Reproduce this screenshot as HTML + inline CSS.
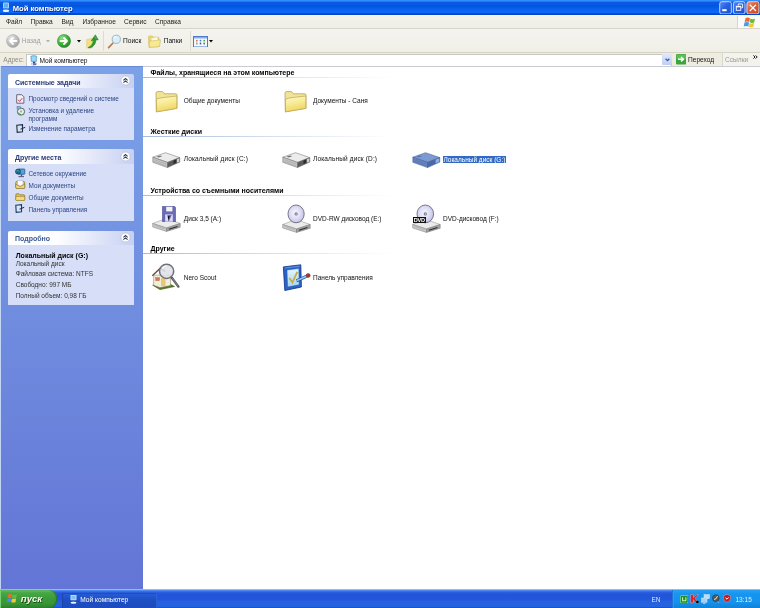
<!DOCTYPE html>
<html><head><meta charset="utf-8">
<style>
*{margin:0;padding:0;box-sizing:border-box}
html,body{width:760px;height:608px;overflow:hidden;background:#fff;font-family:"Liberation Sans",sans-serif;color:#000}
.a{position:absolute;white-space:nowrap}
#title{left:0;top:0;width:760px;height:15px;background:linear-gradient(#3a95ff 0px,#2a80f8 1.2px,#0a5ae6 2.5px,#0555dc 6px,#0a60f0 9px,#0c68f8 12.5px,#0848c8 13.6px,#0848c8 15px)}
#menu{left:0;top:15px;width:760px;height:13.5px;background:linear-gradient(#fbfbf8 0px,#f2f1ea 1.2px,#eeede6 100%);border-bottom:0.8px solid #d8d6cc}
#menu span{position:absolute;top:3px;font-size:6.6px;color:#222}
#tb{left:0;top:28.5px;width:760px;height:24.5px;background:linear-gradient(#f4f3ee,#f0efe7);border-bottom:0.8px solid #d8d4c4}
#addr{left:0;top:53px;width:760px;height:13px;background:#efede2}
#left{left:0;top:66px;width:143px;height:523px;background:linear-gradient(#7ba2e7,#6375d6);box-shadow:inset 0 1px 0 #6a8ad8}
#right{left:143px;top:66px;width:617px;height:523px;background:#fff;box-shadow:inset 0 1px 0 #c8ccd2}
.panel{position:absolute;left:8px;width:126px}
.ph{position:absolute;left:0;top:0;width:126px;height:14.5px;background:linear-gradient(90deg,#fff 0%,#fdfdff 40%,#c6d0f2 100%);border-radius:2px 2px 0 0}
.ph b{position:absolute;left:7px;top:5px;font-size:7px;color:#2a3c76}
.pb{position:absolute;left:0;width:126px;background:#d6dff7}
.lk{position:absolute;left:20.5px;font-size:6.4px;color:#2e4484;white-space:nowrap}
.sh{position:absolute;left:7.5px;font-size:7px;font-weight:bold;color:#000;white-space:nowrap}
.ul{position:absolute;left:0;width:250px;height:1px;background:linear-gradient(90deg,#a8bcd8,#cad8ea 40%,rgba(255,255,255,0))}
.it{position:absolute;font-size:6.5px;color:#111;white-space:nowrap}
.sel{background:#316ac5;color:#fff;padding:0 0.5px}
#task{left:0;top:589px;width:760px;height:19px;background:linear-gradient(#9cb4f4 0,#9cb4f4 0.5px,#6a9af4 1px,#3f7ef0 1.8px,#2a60e0 3.2px,#2254d8 5.5px,#2256da 10px,#2462e0 13px,#2462e0 17.6px,#1a48c0 19px)}
.sep{top:2.5px;width:1px;height:20px;background:#dedbd0}
</style></head><body><div id="root" style="position:absolute;left:0;top:0;width:760px;height:608px;overflow:hidden;will-change:transform">
<div id="title" class="a">
 <svg class="a" style="left:2px;top:2px" width="8" height="10" viewBox="0 0 8 10"><rect x="1" y="0.5" width="6" height="6" rx="0.8" fill="#9fd4ff"/><rect x="2" y="1.5" width="4" height="4" fill="#5ab0f5"/><rect x="3" y="6.5" width="2" height="1.5" fill="#3a5fb0"/><ellipse cx="4" cy="8.8" rx="3.2" ry="1.2" fill="#e8f2ff"/></svg>
 <div class="a" style="left:12.8px;top:3.5px;font-size:7.6px;font-weight:bold;color:#fff;text-shadow:0.6px 0.6px 0 #0a2a8a">Мой компьютер</div>
 <svg class="a" style="left:718.8px;top:0.8px" width="41" height="13.6" viewBox="0 0 41 13.6"><defs><linearGradient id="bb" x1="0" y1="0" x2="1" y2="1"><stop offset="0" stop-color="#5a8cf2"/><stop offset="0.45" stop-color="#2a62e4"/><stop offset="1" stop-color="#1a4cd0"/></linearGradient><linearGradient id="br" x1="0" y1="0" x2="1" y2="1"><stop offset="0" stop-color="#ec9a7e"/><stop offset="0.45" stop-color="#dc5c38"/><stop offset="1" stop-color="#c8482a"/></linearGradient></defs>
<rect x="0.7" y="0.7" width="11.6" height="12.3" rx="2" fill="url(#bb)" stroke="#cfe0ff" stroke-width="0.9"/>
<rect x="3.2" y="8.2" width="4.4" height="2" fill="#fff"/>
<rect x="14.4" y="0.7" width="11.6" height="12.3" rx="2" fill="url(#bb)" stroke="#cfe0ff" stroke-width="0.9"/>
<path d="M19.3 4.6V3H23.6V6.8H22.2" stroke="#fff" stroke-width="0.9" fill="none"/><rect x="17.3" y="5.3" width="4.5" height="4" fill="none" stroke="#fff" stroke-width="0.9"/><path d="M17.3 5.7H21.8" stroke="#fff" stroke-width="1.3"/>
<rect x="27.9" y="0.7" width="12" height="12.3" rx="2" fill="url(#br)" stroke="#f0d8d0" stroke-width="0.9"/>
<path d="M30.8 3.8L37 10M37 3.8L30.8 10" stroke="#fff" stroke-width="1.2"/>
</svg>
</div>
<div id="menu" class="a">
<span style="left:6px">Файл</span><span style="left:30.5px">Правка</span><span style="left:61.5px">Вид</span><span style="left:82.5px">Избранное</span><span style="left:124px">Сервис</span><span style="left:155px">Справка</span>
 <div style="position:absolute;left:736.7px;top:1px;width:23.3px;height:12.3px;background:#fbfcf8;border-left:0.7px solid #d8d6cc"></div>
 <svg style="position:absolute;left:742.5px;top:2px" width="13" height="11" viewBox="0 0 13 11"><path d="M2.5 1.2Q4.5 0 7 1.2L6.2 5Q3.8 3.8 1.6 5Z" fill="#f26a2a"/><path d="M7.5 1.5Q9.6 2.7 12 1.6L11.2 5.5Q8.8 6.5 6.7 5.3Z" fill="#6cb83a"/><path d="M1.5 5.6Q3.7 4.4 6.1 5.6L5.3 9.5Q3 8.3 0.7 9.5Z" fill="#4a9ae8"/><path d="M6.6 5.9Q8.7 7 11.1 6L10.3 9.9Q8 10.9 5.8 9.8Z" fill="#f8c62a"/></svg>
</div>
<div id="tb" class="a">
 <svg class="a" style="left:5.5px;top:5.8px" width="14" height="14" viewBox="0 0 14 14"><defs><radialGradient id="gb" cx="0.35" cy="0.3" r="0.8"><stop offset="0" stop-color="#e8e8e8"/><stop offset="0.6" stop-color="#b9b9b9"/><stop offset="1" stop-color="#9a9a9a"/></radialGradient></defs><circle cx="7" cy="7" r="6.5" fill="url(#gb)" stroke="#a8a8a8" stroke-width="0.5"/><path d="M10.5 7H4.5M7 4L4 7L7 10" stroke="#fff" stroke-width="1.8" fill="none" stroke-linecap="round" stroke-linejoin="round"/></svg>
 <div class="a" style="left:21.7px;top:8.7px;font-size:6.6px;color:#a0a0a0">Назад</div>
 <svg class="a" style="left:45.5px;top:11.3px" width="4" height="3" viewBox="0 0 4 3"><path d="M0 0H4L2 2.5Z" fill="#b0b0b0"/></svg>
 <svg class="a" style="left:57.2px;top:5.8px" width="14" height="14" viewBox="0 0 14 14"><defs><radialGradient id="gf" cx="0.35" cy="0.3" r="0.8"><stop offset="0" stop-color="#8fe08a"/><stop offset="0.55" stop-color="#3fae38"/><stop offset="1" stop-color="#1f7d1f"/></radialGradient></defs><circle cx="7" cy="7" r="6.6" fill="url(#gf)" stroke="#2a8a2a" stroke-width="0.5"/><path d="M3.5 7H9.5M7 4L10 7L7 10" stroke="#fff" stroke-width="1.8" fill="none" stroke-linecap="round" stroke-linejoin="round"/></svg>
 <svg class="a" style="left:76.5px;top:11.3px" width="4" height="3" viewBox="0 0 4 3"><path d="M0 0H4L2 2.5Z" fill="#000"/></svg>
 <svg class="a" style="left:86.2px;top:5.2px" width="13" height="15" viewBox="0 0 13 15"><path d="M0.5 5.5L6.5 4.2V13.8L0.8 14.2Z" fill="#f4e080" stroke="#d8c060" stroke-width="0.4"/><path d="M2 13.5Q6.5 12 7.5 6.5L5.2 6.8L9.3 0.8L12.3 5.8L10 6Q9.5 12 4 14Z" fill="#2a9a2a" stroke="#1a6a1a" stroke-width="0.4"/><path d="M8.8 2.2L10.5 5" stroke="#6ad06a" stroke-width="0.7"/></svg>
 <div class="a sep" style="left:103.3px"></div>
 <svg class="a" style="left:106.5px;top:5.5px" width="15" height="15" viewBox="0 0 15 15"><path d="M1.6 13.6L5.8 9.2" stroke="#b07850" stroke-width="1.6" stroke-linecap="round"/><circle cx="9.3" cy="5.3" r="4.1" fill="#d8f0fc" stroke="#a0b4c4" stroke-width="1"/><path d="M7 4A2.5 2.5 0 0 1 9.6 2.6" stroke="#fff" stroke-width="0.8" fill="none"/></svg>
 <div class="a" style="left:123px;top:8.7px;font-size:6.6px;color:#111">Поиск</div>
 <svg class="a" style="left:148px;top:6.6px" width="14" height="13" viewBox="0 0 14 13"><path d="M0.5 2Q0.5 1 1.5 1H4.5L5.5 2.2H10Q11 2.2 11 3.2V11.5L1 12.3Z" fill="#ecd870" stroke="#c8b050" stroke-width="0.5"/><path d="M3 3.5L9.5 1.8L10.5 8L4 9.5Z" fill="#fffbe8" stroke="#d0c8a0" stroke-width="0.4"/><path d="M1.2 6.2L12.5 4.8L11.5 11.6L1.3 12.4Z" fill="#f8e890" stroke="#c8b050" stroke-width="0.5"/></svg>
 <div class="a" style="left:163.7px;top:8.7px;font-size:6.6px;color:#111">Папки</div>
 <div class="a sep" style="left:189.5px"></div>
 <svg class="a" style="left:192.8px;top:7.3px" width="15" height="11.5" viewBox="0 0 15 11.5"><rect x="0.5" y="0.5" width="14" height="10.5" fill="#f4f8fc" stroke="#4a7ad0" stroke-width="1"/><rect x="1" y="1" width="13" height="1.5" fill="#8aaee8"/><path d="M3.8 4V9M7.5 4V9M11.2 4V9" stroke="#c0c8d0" stroke-width="1.4"/><circle cx="3.8" cy="4.5" r="0.8" fill="#e06a3a"/><circle cx="7.5" cy="4.5" r="0.8" fill="#4a7ad0"/><circle cx="11.2" cy="4.5" r="0.8" fill="#4aa04a"/><circle cx="3.8" cy="7.5" r="0.8" fill="#d8a040"/><circle cx="7.5" cy="7.5" r="0.8" fill="#3a5a90"/><circle cx="11.2" cy="7.5" r="0.8" fill="#3a8a3a"/></svg>
 <svg class="a" style="left:209.2px;top:11.3px" width="4" height="3" viewBox="0 0 4 3"><path d="M0 0H4L2 2.5Z" fill="#000"/></svg>
</div>
<div id="addr" class="a">
 <div class="a" style="left:3.3px;top:3.4px;font-size:6.5px;color:#8a8a80">Адрес:</div>
 <div class="a" style="left:26.2px;top:0.5px;width:645.4px;height:12.5px;background:#fff;border:0.8px solid #c8c8c0;border-bottom:none"></div>
 <svg class="a" style="left:30px;top:2px" width="7.5" height="10.5" viewBox="0 0 7.5 10.5"><path d="M0.8 1.2Q3.7 -0.2 6.8 1.2L6.4 6.6Q3.7 7.6 1.2 6.6Z" fill="#78c4f0" stroke="#4a88c0" stroke-width="0.5"/><path d="M1.8 1.8Q3.7 1 5.8 1.8L5.6 5.4Q3.7 6 2 5.4Z" fill="#9ad8fa"/><path d="M3 6.8H5.2V8.2H3Z" fill="#2a4a8a"/><path d="M1 8.4Q3.8 7.6 6.8 8.4L6.2 10Q3.8 10.5 1.4 10Z" fill="#6a70b0"/><path d="M1.2 8.6L3 8.3V10.1L1.4 10Z" fill="#e0e4ff"/></svg>
 <div class="a" style="left:39.5px;top:3.6px;font-size:6.6px;color:#111">Мой компьютер</div>
 <div class="a" style="left:662px;top:1px;width:9.6px;height:11.2px;background:linear-gradient(#dfe8fb,#c0cff2);border-radius:1px"></div>
 <svg class="a" style="left:664.6px;top:5px" width="5" height="4" viewBox="0 0 5 4"><path d="M0.6 0.8L2.5 2.7L4.4 0.8" stroke="#3a5aa8" stroke-width="1.3" fill="none"/></svg>
 <svg class="a" style="left:675.8px;top:1.2px" width="10.5" height="10.5" viewBox="0 0 10.5 10.5"><rect x="0" y="0" width="10.5" height="10.5" rx="1.2" fill="#3aa53a"/><rect x="0.5" y="0.5" width="9.5" height="4.5" rx="1" fill="#6cc86a" opacity="0.7"/><path d="M2 5.2H7M5 3L7.6 5.2L5 7.4" stroke="#fff" stroke-width="1.4" fill="none" stroke-linejoin="round"/></svg>
 <div class="a" style="left:688px;top:3.1px;font-size:6.6px;color:#111">Переход</div>
 <div class="a" style="left:721.8px;top:0;width:38.2px;height:13px;background:#f3f2ec;border-left:1px solid #dcd8cc"></div>
 <div class="a" style="left:725px;top:3.1px;font-size:6.6px;color:#9a9890">Ссылки</div>
 <svg class="a" style="left:752.5px;top:2.2px" width="5" height="4" viewBox="0 0 5 4"><path d="M0.4 0.4L2 2L0.4 3.6M2.6 0.4L4.2 2L2.6 3.6" stroke="#000" stroke-width="0.9" fill="none"/></svg>
</div>
<div id="left" class="a">
 <div class="a" style="left:0;top:0;width:1px;height:523px;background:linear-gradient(#c8dcf8,#c0d4f4)"></div>
 <div class="panel" style="top:7.7px">
  <div class="ph"><b>Системные задачи</b><svg class="a" style="left:112px;top:1.6px" width="11" height="11" viewBox="0 0 11 11"><circle cx="5.5" cy="5.5" r="4.6" fill="#fff" stroke="#b8c0d8" stroke-width="0.8"/><path d="M3.4 5.3L5.5 3.5L7.6 5.3M3.4 7.7L5.5 5.9L7.6 7.7" stroke="#333a50" stroke-width="1.05" fill="none"/></svg></div>
  <div class="pb" style="top:14.4px;height:51.8px">
   <svg class="a" style="left:8px;top:5.7px" width="9" height="10" viewBox="0 0 9 10"><path d="M0.7 0.7H5.8L7.9 2.8V9.2H0.7Z" fill="#eef0f4" stroke="#706878" stroke-width="1"/><path d="M2.2 5.8L3.6 7.4L6.2 4.2" stroke="#c83060" stroke-width="1" fill="none"/></svg>
   <div class="lk" style="top:7.0px">Просмотр сведений о системе</div>
   <svg class="a" style="left:8px;top:18.2px" width="9.5" height="9.5" viewBox="0 0 9.5 9.5"><circle cx="5" cy="5.6" r="3.6" fill="#e4ece4" stroke="#485a58" stroke-width="0.9"/><circle cx="5" cy="5.6" r="1" fill="#8aa"/><rect x="1" y="0.4" width="3.2" height="2.6" fill="#8ab0c8" stroke="#5a6a8a" stroke-width="0.4"/><path d="M2 6.5Q3 8.5 5 8.6" stroke="#3a9a3a" stroke-width="1" fill="none"/></svg>
   <div class="lk" style="top:19.0px">Установка и удаление</div>
   <div class="lk" style="top:26.8px">программ</div>
   <svg class="a" style="left:7.6px;top:36.2px" width="10" height="9" viewBox="0 0 10 9"><path d="M0.8 1.2L6.5 0.7V7.8L1.2 8.4Z" fill="#d8e4ec" stroke="#1e2a4a" stroke-width="1.1"/><path d="M4.5 5.2L9.2 3.3" stroke="#1e2a4a" stroke-width="1"/></svg>
   <div class="lk" style="top:37.0px">Изменение параметра</div>
  </div>
 </div>
 <div class="panel" style="top:83.2px">
  <div class="ph"><b>Другие места</b><svg class="a" style="left:112px;top:1.6px" width="11" height="11" viewBox="0 0 11 11"><circle cx="5.5" cy="5.5" r="4.6" fill="#fff" stroke="#b8c0d8" stroke-width="0.8"/><path d="M3.4 5.3L5.5 3.5L7.6 5.3M3.4 7.7L5.5 5.9L7.6 7.7" stroke="#333a50" stroke-width="1.05" fill="none"/></svg></div>
  <div class="pb" style="top:14.7px;height:57.1px">
   <svg class="a" style="left:7.2px;top:4.6px" width="10.5" height="10" viewBox="0 0 10.5 10"><rect x="3.2" y="1" width="6.6" height="5.2" rx="0.6" fill="#4aa8e8" stroke="#1a4a78" stroke-width="0.7"/><circle cx="3" cy="3.6" r="2.6" fill="#1a6a8a" stroke="#0a3050" stroke-width="0.5"/><path d="M1.5 3Q3 2 4.5 3.2" stroke="#6ad0c0" stroke-width="0.6" fill="none"/><path d="M3.5 8.6H9" stroke="#6a5a8a" stroke-width="1.1"/><rect x="5.8" y="6.2" width="1.4" height="2" fill="#4a5a7a"/></svg>
   <div class="lk" style="top:6.1px">Сетевое окружение</div>
   <svg class="a" style="left:7.2px;top:16.4px" width="10.5" height="9" viewBox="0 0 10.5 9"><path d="M0.8 2.5Q0.8 1.5 1.8 1.5H8.7Q9.7 1.5 9.7 2.5V7.6Q9.7 8.4 8.9 8.4H1.6Q0.8 8.4 0.8 7.6Z" fill="#e8d070" stroke="#8a7030" stroke-width="0.8"/><path d="M2.4 0.6H8V4.6L5.2 6.2L2.4 4.6Z" fill="#fff" stroke="#9a9aa8" stroke-width="0.5"/><path d="M0.8 4.2L5.2 6.6L9.7 4.2V7.6Q9.7 8.4 8.9 8.4H1.6Q0.8 8.4 0.8 7.6Z" fill="#f2dc78" stroke="#8a7030" stroke-width="0.6"/></svg>
   <div class="lk" style="top:17.8px">Мои документы</div>
   <svg class="a" style="left:7.2px;top:28.8px" width="10.5" height="8" viewBox="0 0 10.5 8"><path d="M0.8 1.6Q0.8 0.8 1.6 0.8H4L5 1.8H9Q9.7 1.8 9.7 2.6V6.8Q9.7 7.4 9 7.4H1.5Q0.8 7.4 0.8 6.8Z" fill="#dcc050" stroke="#8a7030" stroke-width="0.7"/><path d="M0.8 3.6H9.7V6.8Q9.7 7.4 9 7.4H1.5Q0.8 7.4 0.8 6.8Z" fill="#f6e07a" stroke="#8a7030" stroke-width="0.5"/></svg>
   <div class="lk" style="top:29.7px">Общие документы</div>
   <svg class="a" style="left:7.4px;top:40.3px" width="10" height="9" viewBox="0 0 10 9"><path d="M0.8 1.2L6.5 0.7V7.8L1.2 8.4Z" fill="#d8e8f4" stroke="#1e3a6a" stroke-width="1.1"/><path d="M4.5 5.2L9.2 3.3" stroke="#1e2a4a" stroke-width="1"/></svg>
   <div class="lk" style="top:41.7px">Панель управления</div>
  </div>
 </div>
 <div class="panel" style="top:164.5px">
  <div class="ph"><b style="color:#3a5a92;top:4.1px">Подробно</b><svg class="a" style="left:112px;top:1.6px" width="11" height="11" viewBox="0 0 11 11"><circle cx="5.5" cy="5.5" r="4.6" fill="#fff" stroke="#b8c0d8" stroke-width="0.8"/><path d="M3.4 5.3L5.5 3.5L7.6 5.3M3.4 7.7L5.5 5.9L7.6 7.7" stroke="#333a50" stroke-width="1.05" fill="none"/></svg></div>
  <div class="pb" style="top:14.4px;height:59.8px">
   <div class="a" style="left:7.7px;top:7px;font-size:7px;font-weight:bold;color:#000">Локальный диск (G:)</div>
   <div class="a" style="left:7.7px;top:15.2px;font-size:6.5px;color:#333">Локальный диск</div>
   <div class="a" style="left:7.7px;top:25.6px;font-size:6.5px;color:#333">Файловая система: NTFS</div>
   <div class="a" style="left:7.7px;top:36.4px;font-size:6.5px;color:#333">Свободно: 997 МБ</div>
   <div class="a" style="left:7.7px;top:47px;font-size:6.5px;color:#333">Полный объем: 0,98 ГБ</div>
  </div>
 </div>
</div>
<div id="right" class="a">
 <div class="sh" style="top:3px">Файлы, хранящиеся на этом компьютере</div>
 <div class="ul" style="top:11px"></div>
 <div class="sh" style="top:62px">Жесткие диски</div>
 <div class="ul" style="top:70px"></div>
 <div class="sh" style="top:120.5px">Устройства со съемными носителями</div>
 <div class="ul" style="top:129px"></div>
 <div class="sh" style="top:178.5px">Другие</div>
 <div class="ul" style="top:187px"></div>
</div>
 <svg class="a" style="left:154.5px;top:90.8px" width="24" height="22" viewBox="0 0 24 22"><defs><linearGradient id="fg1" x1="0" y1="0" x2="0.3" y2="1"><stop offset="0" stop-color="#fdf8c8"/><stop offset="0.5" stop-color="#f8ec98"/><stop offset="1" stop-color="#f0d460"/></linearGradient></defs><path d="M1 2.2Q1 0.6 2.5 0.6H7Q8 0.6 8.6 1.6L9.4 2.8H20.8Q22 2.8 22 4V17.3L1.3 20.8Z" fill="#f2e496" stroke="#b09a48" stroke-width="0.7"/><path d="M1.4 8.2Q5 6.8 9.5 6.4L21.8 5V17.4L1.6 20.9Z" fill="url(#fg1)" stroke="#b49c48" stroke-width="0.6"/></svg>
 <div class="it" style="left:183.8px;top:97.1px">Общие документы</div>
 <svg class="a" style="left:284.3px;top:90.8px" width="24" height="22" viewBox="0 0 24 22"><defs><linearGradient id="fg2" x1="0" y1="0" x2="0.3" y2="1"><stop offset="0" stop-color="#fdf8c8"/><stop offset="0.5" stop-color="#f8ec98"/><stop offset="1" stop-color="#f0d460"/></linearGradient></defs><path d="M1 2.2Q1 0.6 2.5 0.6H7Q8 0.6 8.6 1.6L9.4 2.8H20.8Q22 2.8 22 4V17.3L1.3 20.8Z" fill="#f2e496" stroke="#b09a48" stroke-width="0.7"/><path d="M1.4 8.2Q5 6.8 9.5 6.4L21.8 5V17.4L1.6 20.9Z" fill="url(#fg2)" stroke="#b49c48" stroke-width="0.6"/></svg>
 <div class="it" style="left:313px;top:97.1px">Документы - Саня</div>
 <svg class="a" style="left:152.1px;top:151.6px" width="29" height="17" viewBox="0 0 29 17"><path d="M0.8 5.2L13.5 0.7L27.8 5.6L15.5 10.4Z" fill="#ececec" stroke="#6a6a6a" stroke-width="0.5"/><path d="M0.8 5.2L15.5 10.4V15.6L0.8 10.3Z" fill="#c4c4c4" stroke="#6a6a6a" stroke-width="0.5"/><path d="M15.5 10.4L27.8 5.6V10.1L15.5 15.6Z" fill="#5a5a5a" stroke="#6a6a6a" stroke-width="0.5"/><path d="M21.5 8.5L24.5 7.3V10.8L21.5 12Z" fill="#2e2e2e"/><path d="M24.8 7.2L27.3 6.2V9.8L24.8 10.8Z" fill="#d0d0da"/><path d="M4.5 4.8L8.2 3.5L10.2 4.2L6.5 5.5Z" fill="#505050" opacity="0.8"/><path d="M2.2 7.6L14.3 12M2.2 9.4L14.3 13.8" stroke="#6a6a6a" stroke-width="0.4" opacity="0.5"/></svg>
 <div class="it" style="left:183.8px;top:155.3px;letter-spacing:0.14px">Локальный диск (C:)</div>
 <svg class="a" style="left:282.3px;top:151.5px" width="29" height="17" viewBox="0 0 29 17"><path d="M0.8 5.2L13.5 0.7L27.8 5.6L15.5 10.4Z" fill="#ececec" stroke="#6a6a6a" stroke-width="0.5"/><path d="M0.8 5.2L15.5 10.4V15.6L0.8 10.3Z" fill="#c4c4c4" stroke="#6a6a6a" stroke-width="0.5"/><path d="M15.5 10.4L27.8 5.6V10.1L15.5 15.6Z" fill="#5a5a5a" stroke="#6a6a6a" stroke-width="0.5"/><path d="M21.5 8.5L24.5 7.3V10.8L21.5 12Z" fill="#2e2e2e"/><path d="M24.8 7.2L27.3 6.2V9.8L24.8 10.8Z" fill="#d0d0da"/><path d="M4.5 4.8L8.2 3.5L10.2 4.2L6.5 5.5Z" fill="#505050" opacity="0.8"/><path d="M2.2 7.6L14.3 12M2.2 9.4L14.3 13.8" stroke="#6a6a6a" stroke-width="0.4" opacity="0.5"/></svg>
 <div class="it" style="left:313px;top:155.3px;letter-spacing:0.14px">Локальный диск (D:)</div>
 <svg class="a" style="left:411.8px;top:151.8px" width="29" height="17" viewBox="0 0 29 17"><path d="M0.8 5.2L13.5 0.7L27.8 5.6L15.5 10.4Z" fill="#7c9ad2" stroke="#3a5890" stroke-width="0.5"/><path d="M0.8 5.2L15.5 10.4V15.6L0.8 10.3Z" fill="#6684c0" stroke="#3a5890" stroke-width="0.5"/><path d="M15.5 10.4L27.8 5.6V10.1L15.5 15.6Z" fill="#4a68a8" stroke="#3a5890" stroke-width="0.5"/><path d="M23.6 7.7L27.2 6.3V9.8L23.6 11.3Z" fill="#90b0ec"/><path d="M4.5 4.6L8 3.5L10 4.2L6.5 5.3Z" fill="#34548e" opacity="0.55"/><path d="M2.2 7.6L14.3 12M2.2 9.4L14.3 13.8" stroke="#34548e" stroke-width="0.4" opacity="0.5"/></svg>
 <div class="it sel" style="left:443px;top:155.7px">Локальный диск (G:)</div>
 <svg class="a" style="left:152.3px;top:218.2px" width="30" height="14" viewBox="0 0 30 14"><path d="M0.7 5.5L14 0.5L28.2 5.5L14.5 10Z" fill="#ebebeb" stroke="#8a8a8a" stroke-width="0.5"/><path d="M0.7 5.5L14.5 10V13.4L0.7 9Z" fill="#c8c8c8" stroke="#808080" stroke-width="0.5"/><path d="M14.5 10L28.2 5.5V9.3L14.5 13.4Z" fill="#a4a4a4" stroke="#707070" stroke-width="0.5"/><path d="M16.8 11.2L25.5 8.4" stroke="#2a2a2a" stroke-width="1.1"/><path d="M2.5 7.4L12.5 10.8" stroke="#9a9a9a" stroke-width="0.4"/></svg>
 <svg class="a" style="left:162px;top:206.3px" width="14" height="16" viewBox="0 0 14 16"><path d="M0.3 0.3H12.5L13.7 1.5V15.7H0.3Z" fill="#6a6ab8" stroke="#40408a" stroke-width="0.5"/><rect x="4.2" y="0.8" width="6.2" height="4.6" fill="#f4f4ec"/><path d="M3.2 8.4H10.8V15.7H3.2Z" fill="#dcdcf0"/><path d="M5.6 9.6L8.8 9.6L6.4 15" stroke="#6a6ab8" stroke-width="1.3"/></svg>
 <div class="it" style="left:183.8px;top:214.8px">Диск 3,5 (A:)</div>
 <svg class="a" style="left:282px;top:219px" width="30" height="14" viewBox="0 0 30 14"><path d="M0.7 5.5L14 0.5L28.2 5.5L14.5 10Z" fill="#ebebeb" stroke="#8a8a8a" stroke-width="0.5"/><path d="M0.7 5.5L14.5 10V13.4L0.7 9Z" fill="#c8c8c8" stroke="#808080" stroke-width="0.5"/><path d="M14.5 10L28.2 5.5V9.3L14.5 13.4Z" fill="#a4a4a4" stroke="#707070" stroke-width="0.5"/><path d="M16.8 11.2L25.5 8.4" stroke="#2a2a2a" stroke-width="1.1"/><path d="M2.5 7.4L12.5 10.8" stroke="#9a9a9a" stroke-width="0.4"/></svg>
 <svg class="a" style="left:286.79999999999995px;top:204.0px" width="18.2" height="19.8" viewBox="0 0 18.2 19.8"><defs><radialGradient id="dg" cx="0.45" cy="0.45" r="0.6"><stop offset="0" stop-color="#f8f8ff"/><stop offset="0.55" stop-color="#dcdcf6"/><stop offset="1" stop-color="#c0c0e4"/></radialGradient></defs><ellipse cx="9.1" cy="9.9" rx="8.1" ry="8.9" fill="url(#dg)" stroke="#5a5a68" stroke-width="0.8"/><circle cx="9.1" cy="9.9" r="1.6" fill="#707080"/><circle cx="9.1" cy="9.9" r="0.6" fill="#fff"/></svg>
 <div class="it" style="left:313px;top:214.8px">DVD-RW дисковод (E:)</div>
 <svg class="a" style="left:411.8px;top:219.4px" width="30" height="14" viewBox="0 0 30 14"><path d="M0.7 5.5L14 0.5L28.2 5.5L14.5 10Z" fill="#ebebeb" stroke="#8a8a8a" stroke-width="0.5"/><path d="M0.7 5.5L14.5 10V13.4L0.7 9Z" fill="#c8c8c8" stroke="#808080" stroke-width="0.5"/><path d="M14.5 10L28.2 5.5V9.3L14.5 13.4Z" fill="#a4a4a4" stroke="#707070" stroke-width="0.5"/><path d="M16.8 11.2L25.5 8.4" stroke="#2a2a2a" stroke-width="1.1"/><path d="M2.5 7.4L12.5 10.8" stroke="#9a9a9a" stroke-width="0.4"/></svg>
 <svg class="a" style="left:415.9px;top:204.0px" width="18.6" height="19.8" viewBox="0 0 18.6 19.8"><defs><radialGradient id="dg" cx="0.45" cy="0.45" r="0.6"><stop offset="0" stop-color="#f8f8ff"/><stop offset="0.55" stop-color="#dcdcf6"/><stop offset="1" stop-color="#c0c0e4"/></radialGradient></defs><ellipse cx="9.3" cy="9.9" rx="8.3" ry="8.9" fill="url(#dg)" stroke="#5a5a68" stroke-width="0.8"/><circle cx="9.3" cy="9.9" r="1.6" fill="#707080"/><circle cx="9.3" cy="9.9" r="0.6" fill="#fff"/></svg>
 <div class="a" style="left:412.6px;top:216.5px;width:13.2px;height:6.4px;background:#111;color:#fff;font-size:5.6px;font-weight:bold;line-height:6.6px;text-align:center;letter-spacing:-0.3px">DVD</div>
 <div class="it" style="left:443px;top:214.8px">DVD-дисковод (F:)</div>
 <svg class="a" style="left:148px;top:258px" width="34" height="34" viewBox="0 0 34 34"><path d="M4.7 27.2L19 24.5L26.5 28.5L12 31.6Z" fill="#5a7a2a" stroke="#3a5218" stroke-width="0.6"/><path d="M5.6 17.2H22.5V27.5L12 29.6L5.6 27.2Z" fill="#f2eedc" stroke="#8a7a60" stroke-width="0.5"/><path d="M4.3 17.8L12.5 10L17 13.5" stroke="#6a5040" stroke-width="1.4" fill="none"/><rect x="7.6" y="19.5" width="4" height="3.2" fill="#d07a5a" stroke="#9a5a40" stroke-width="0.3"/><rect x="13" y="20" width="4.5" height="8" fill="#e6c878"/><path d="M23.8 19.8L30.4 28.6" stroke="#5a5a62" stroke-width="2.4" stroke-linecap="round"/><path d="M24.5 20.5L30 28" stroke="#9a9aa4" stroke-width="0.7"/><circle cx="18.6" cy="13.3" r="7.1" fill="#dde2e8" fill-opacity="0.85" stroke="#707078" stroke-width="1.5"/><path d="M14.2 11A5 5 0 0 1 18.5 7.8" stroke="#fff" stroke-width="1" fill="none"/></svg>
 <div class="it" style="left:183.8px;top:273.7px">Nero Scout</div>
 <svg class="a" style="left:278px;top:258px" width="34" height="34" viewBox="0 0 34 34"><defs><linearGradient id="cpg" x1="0" y1="0" x2="0" y2="1"><stop offset="0" stop-color="#e4f4ff"/><stop offset="1" stop-color="#a8d4f4"/></linearGradient></defs><path d="M5.3 8.9L22.8 6.8L23.4 29L6.8 32.5Z" fill="#2a64c8" stroke="#0e3480" stroke-width="0.8"/><path d="M6.8 10L21.8 8.2" stroke="#6aa0ec" stroke-width="0.8"/><path d="M9 12L20.8 10.6L21.2 26.8L9.6 29Z" fill="url(#cpg)" stroke="#1a4aa0" stroke-width="0.4"/><path d="M11.2 20L14.5 24.3L19.3 13.8" stroke="#c0b040" stroke-width="1.8" fill="none"/><path d="M18.5 22.8L29.8 17.6" stroke="#1e4a90" stroke-width="3"/><path d="M18.5 22.8L29.8 17.6" stroke="#8ac4f4" stroke-width="1.8"/><circle cx="30.2" cy="17.4" r="2" fill="#a83828" stroke="#6a2018" stroke-width="0.4"/></svg>
 <div class="it" style="left:313px;top:273.7px">Панель управления</div>
<div id="task" class="a">
 <div class="a" style="left:0;top:0.9px;width:56.6px;height:18.1px;border-radius:0 8px 8px 0;background:linear-gradient(#6cc46a 0%,#48a846 15%,#3c9c3a 45%,#379636 75%,#2c802c 100%);box-shadow:inset -1px 0 1.2px #2a6a2a,inset 1px 0 0 #7ad078"></div>
 <svg class="a" style="left:6.6px;top:593.4px;top:4.3px" width="11" height="11" viewBox="0 0 11 11"><path d="M1.2 1.6Q3 0.6 5 1.4L4.4 4.9Q2.6 4.2 0.6 5Z" fill="#f06a30"/><path d="M5.6 1.5Q7.6 2.3 9.8 1.4L9.2 5Q7.2 5.8 5 5Z" fill="#6ab83a"/><path d="M0.5 5.6Q2.5 4.9 4.3 5.6L3.7 9.2Q1.9 8.5 0 9.2Z" fill="#4a8ae8"/><path d="M4.9 5.7Q6.9 6.4 9.1 5.6L8.5 9.2Q6.5 10 4.3 9.2Z" fill="#f8c830"/></svg>
 <div class="a" style="left:20.8px;top:3.9px;font-size:9.6px;font-weight:bold;font-style:italic;color:#f6f8ea;text-shadow:0.6px 0.6px 0.6px #1a4a1a">пуск</div>
 <div class="a" style="left:62.1px;top:3.5px;width:94.8px;height:16px;border-radius:2px;background:linear-gradient(#2a5ed6,#1e4fc4 40%,#1c4bbd);box-shadow:inset 0.6px 0.6px 0 #1a3f9a,inset -0.6px 0 0 #3a6ae0"></div>
 <svg class="a" style="left:69.8px;top:6.3px" width="7" height="9" viewBox="0 0 7 9"><rect x="0.5" y="0" width="6" height="5.2" rx="0.6" fill="#bfe0ff"/><rect x="1.4" y="0.8" width="4.2" height="3.6" fill="#7fc0f5"/><rect x="2.6" y="5.2" width="1.8" height="1.3" fill="#5070b0"/><ellipse cx="3.5" cy="7.8" rx="3" ry="1" fill="#f0f4ff"/></svg>
 <div class="a" style="left:80.3px;top:7.3px;font-size:6.6px;color:#fff">Мой компьютер</div>
 <div class="a" style="left:651.6px;top:7.2px;font-size:6.4px;color:#d8e8ff">EN</div>
 <div class="a" style="left:672.4px;top:0.8px;width:87.6px;height:18.2px;background:linear-gradient(#2aa0f5,#1696ee 20%,#1492ec 70%,#1280d8);box-shadow:inset 0.7px 0 0 #1a60c8,inset 1.5px 0 0 #30a8f8"></div>
 <svg class="a" style="left:679.8px;top:5.5px" width="8.5" height="8.5" viewBox="0 0 8.5 8.5"><rect x="0.4" y="0.4" width="7.7" height="7.7" rx="1.3" fill="#1f8a2a" stroke="#9ae89a" stroke-width="0.7"/><path d="M2.6 2.2V5.8H6M5.9 2.2V5.8" stroke="#c8f5a8" stroke-width="1.1" fill="none"/></svg>
 <svg class="a" style="left:689.8px;top:5.2px" width="9" height="9.5" viewBox="0 0 9 9.5"><path d="M0.6 0.6H3.4V3.6L6.6 0.6H8.6L5 4.3L8.4 8.8H5.6L3.4 5.6V8.8H0.6Z" fill="#e81818" stroke="#bcd8f8" stroke-width="0.4"/><circle cx="7.4" cy="8" r="1.3" fill="#000"/></svg>
 <svg class="a" style="left:700.5px;top:5px" width="9" height="10" viewBox="0 0 9 10"><rect x="3" y="0.5" width="5.5" height="4.2" fill="#b8dcf8" stroke="#d8ecff" stroke-width="0.5"/><rect x="0.5" y="4" width="5.5" height="4.2" fill="#a8d0f0" stroke="#d8ecff" stroke-width="0.5"/><path d="M3.2 8.4V9.6M1.8 9.6H4.6" stroke="#d0e8ff" stroke-width="0.6"/></svg>
 <svg class="a" style="left:711.5px;top:5.2px" width="8" height="9" viewBox="0 0 8 9"><circle cx="3.8" cy="4.2" r="3.4" fill="#505860" stroke="#283040" stroke-width="0.5"/><path d="M2 5.5Q4.5 5.5 5.5 2" stroke="#f8e8a0" stroke-width="1" fill="none"/><path d="M5.5 7.5L7 8.8" stroke="#b8d0f0" stroke-width="0.6"/></svg>
 <svg class="a" style="left:722.8px;top:5.2px" width="8" height="8.5" viewBox="0 0 8 8.5"><path d="M4 0.4L7.4 1.6V4.4Q7.4 6.9 4 8.2Q0.6 6.9 0.6 4.4V1.6Z" fill="#c81820" stroke="#f0c0c0" stroke-width="0.4"/><path d="M2.5 3.8L4 5.2L5.6 3.4" stroke="#fff" stroke-width="1" fill="none"/></svg>
 <div class="a" style="left:735.5px;top:7.2px;font-size:6.5px;color:#e0f2ff">13:15</div>
</div>
</div></body></html>
